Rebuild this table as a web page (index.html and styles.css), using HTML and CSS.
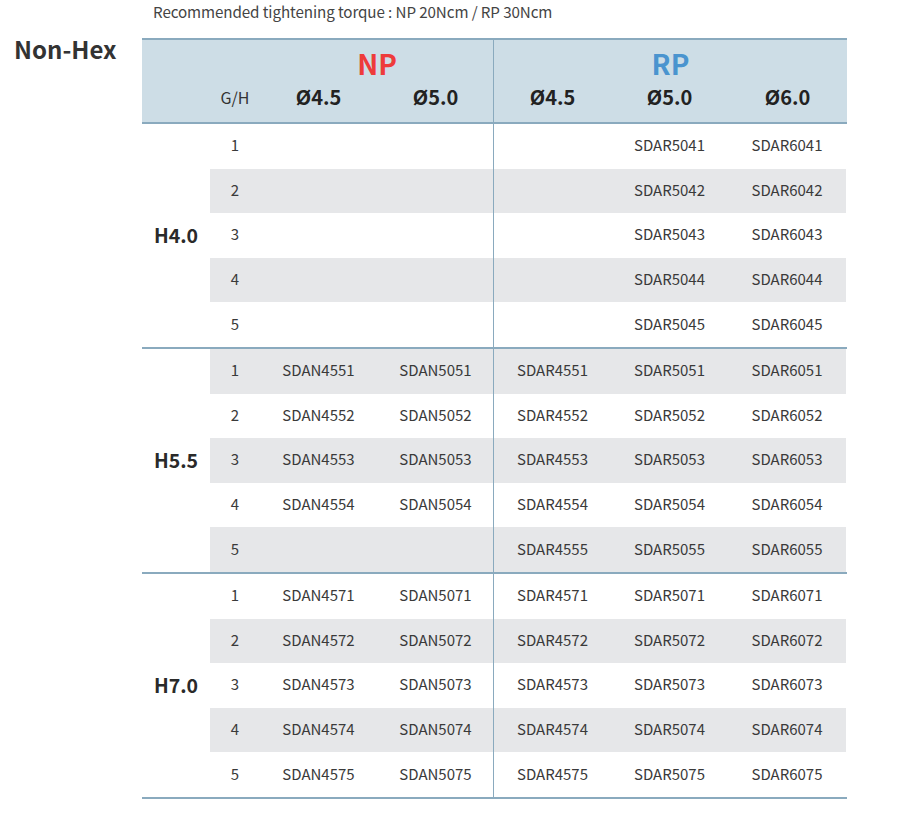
FILE: index.html
```html
<!DOCTYPE html>
<html>
<head>
<meta charset="utf-8">
<link rel="stylesheet" href="styles.css">
</head>
<body>
<div class="page">
  <p class="note">Recommended tightening torque : NP 20Ncm / RP 30Ncm</p>
  <div class="main">
    <h1 class="title">Non-Hex</h1>
    <div class="table">
      <div class="head">
        <span class="hc np">NP</span>
        <span class="hc rp dv">RP</span>
        <span class="hc gh-h">G/H</span>
        <span class="hc dia c3">Ø4.5</span>
        <span class="hc dia c4">Ø5.0</span>
        <span class="hc dia c5 dv">Ø4.5</span>
        <span class="hc dia c6">Ø5.0</span>
        <span class="hc dia c7">Ø6.0</span>
      </div>

      <div class="group">
        <div class="glabel">H4.0</div>
        <div class="rows">
          <div class="row"><span>1</span><span></span><span></span><span class="dv"></span><span>SDAR5041</span><span>SDAR6041</span></div>
          <div class="row alt"><span>2</span><span></span><span></span><span class="dv"></span><span>SDAR5042</span><span>SDAR6042</span></div>
          <div class="row"><span>3</span><span></span><span></span><span class="dv"></span><span>SDAR5043</span><span>SDAR6043</span></div>
          <div class="row alt"><span>4</span><span></span><span></span><span class="dv"></span><span>SDAR5044</span><span>SDAR6044</span></div>
          <div class="row"><span>5</span><span></span><span></span><span class="dv"></span><span>SDAR5045</span><span>SDAR6045</span></div>
        </div>
      </div>

      <div class="group">
        <div class="glabel">H5.5</div>
        <div class="rows">
          <div class="row alt"><span>1</span><span>SDAN4551</span><span>SDAN5051</span><span class="dv">SDAR4551</span><span>SDAR5051</span><span>SDAR6051</span></div>
          <div class="row"><span>2</span><span>SDAN4552</span><span>SDAN5052</span><span class="dv">SDAR4552</span><span>SDAR5052</span><span>SDAR6052</span></div>
          <div class="row alt"><span>3</span><span>SDAN4553</span><span>SDAN5053</span><span class="dv">SDAR4553</span><span>SDAR5053</span><span>SDAR6053</span></div>
          <div class="row"><span>4</span><span>SDAN4554</span><span>SDAN5054</span><span class="dv">SDAR4554</span><span>SDAR5054</span><span>SDAR6054</span></div>
          <div class="row alt"><span>5</span><span></span><span></span><span class="dv">SDAR4555</span><span>SDAR5055</span><span>SDAR6055</span></div>
        </div>
      </div>

      <div class="group">
        <div class="glabel">H7.0</div>
        <div class="rows">
          <div class="row"><span>1</span><span>SDAN4571</span><span>SDAN5071</span><span class="dv">SDAR4571</span><span>SDAR5071</span><span>SDAR6071</span></div>
          <div class="row alt"><span>2</span><span>SDAN4572</span><span>SDAN5072</span><span class="dv">SDAR4572</span><span>SDAR5072</span><span>SDAR6072</span></div>
          <div class="row"><span>3</span><span>SDAN4573</span><span>SDAN5073</span><span class="dv">SDAR4573</span><span>SDAR5073</span><span>SDAR6073</span></div>
          <div class="row alt"><span>4</span><span>SDAN4574</span><span>SDAN5074</span><span class="dv">SDAR4574</span><span>SDAR5074</span><span>SDAR6074</span></div>
          <div class="row"><span>5</span><span>SDAN4575</span><span>SDAN5075</span><span class="dv">SDAR4575</span><span>SDAR5075</span><span>SDAR6075</span></div>
        </div>
      </div>
    </div>
  </div>
</div>
</body>
</html>
```

FILE: styles.css
```css
* { box-sizing: border-box; }
html, body { margin: 0; padding: 0; background: #fff; }
body {
  font-family: "Noto Sans CJK KR", "Noto Sans", sans-serif;
  color: #3a3a3a;
  width: 907px;
  height: 817px;
  overflow: hidden;
}
.note {
  margin: 0;
  padding-left: 153px;
  font-size: 15.2px;
  line-height: 22px;
  color: #444;
  letter-spacing: -0.1px;
}
.main {
  display: flex;
  align-items: flex-start;
  margin-top: 12px;
}
.title {
  width: 142px;
  margin: 0;
  padding-left: 14px;
  font-size: 24px;
  line-height: 30px;
  font-weight: 700;
  color: #333;
}
.table {
  width: 705px;
  margin-top: 4px;
}
.head {
  display: grid;
  grid-template-columns: 68px 50px 117px 117px 117px 117px 119px;
  grid-template-rows: 44px 38px;
  background: #cddde6;
  border-top: 2px solid #8aaabe;
  border-bottom: 2px solid #8aaabe;
}
.hc {
  display: flex;
  justify-content: center;
  text-align: center;
}
.np, .rp {
  font-size: 28px;
  line-height: 46px;
  font-weight: 700;
}
.np { grid-column: 3 / 5; grid-row: 1; color: #ee3b3b; }
.rp { grid-column: 5 / 8; grid-row: 1; color: #4a94cf; }
.gh-h {
  grid-column: 2; grid-row: 2;
  font-size: 16px;
  line-height: 26px;
  color: #333;
}
.dia {
  grid-row: 2;
  font-size: 20px;
  line-height: 26px;
  font-weight: 700;
  color: #222;
}
.c3 { grid-column: 3; }
.c4 { grid-column: 4; }
.c5 { grid-column: 5; }
.c6 { grid-column: 6; }
.c7 { grid-column: 7; }
.dv { border-left: 1px solid #8aaabe; }
.head .dv { margin-left: -1px; }
.group {
  display: flex;
  border-bottom: 2px solid #8aaabe;
}
.glabel {
  width: 68px;
  flex: none;
  display: flex;
  align-items: center;
  justify-content: center;
  padding-bottom: 1px;
  font-size: 19.5px;
  font-weight: 700;
  color: #2a2a2a;
}
.rows { flex: 1; }
.row {
  display: grid;
  grid-template-columns: 50px 117px 117px 117px 117px 118px;
  height: 44.6px;
  margin-right: 1px;
}
.row.alt { background: #e6e7e9; }
.row span {
  display: flex;
  align-items: center;
  justify-content: center;
  font-size: 15px;
  padding-bottom: 3px;
  color: #3a3a3a;
}
.row .dv { margin-left: -1px; }
```
